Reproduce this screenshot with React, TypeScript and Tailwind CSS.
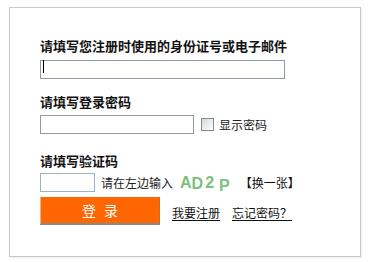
import React from 'react'

const cjk = { fontFamily: '"Noto Sans CJK SC", "Liberation Sans", sans-serif' }

const Captcha: React.FC = () => (
  <div
    className="flex items-end h-[19px] ml-[7px] text-[#7cc07c] font-bold leading-none select-none"
    style={{ fontFamily: '"Liberation Sans", Arial, sans-serif' }}
  >
    <span className="text-[16px] mb-[1px]">A</span>
    <span className="text-[16px]">D</span>
    <span className="text-[16px] ml-[2px] mb-[1px]">2</span>
    <span className="text-[16px] ml-[5px] -mb-[2px]">P</span>
  </div>
)

export default function App() {
  return (
    <div className="w-[370px] h-[262px] bg-white overflow-hidden text-[#111]" style={cjk}>
      <div className="mt-[7px] ml-[9px] w-[352px] h-[250px] border border-[#c8c8c8] shadow-[1px_1px_2px_rgba(0,0,0,0.08)] pl-[30px] pt-[30px] flex flex-col">
        <label className="text-[13px] leading-[16px] h-[16px] font-bold">
          请填写您注册时使用的身份证号或电子邮件
        </label>
        <div className="relative mt-[3px] w-[245px] h-[19px]">
          <input className="w-full h-full border border-[#8f9aa4] bg-white outline-none" />
          <span className="absolute left-[3px] top-[3px] w-[1px] h-[13px] bg-black" />
        </div>

        <label className="mt-[18px] text-[13px] leading-[16px] h-[16px] font-bold">请填写登录密码</label>
        <div className="mt-[5px] flex items-center h-[19px]">
          <input type="password" className="w-[154px] h-[19px] border border-[#8f9aa4] bg-white outline-none" />
          <span className="ml-[7px] w-[13px] h-[13px] border border-[#7f8a94] bg-gradient-to-br from-[#d8d8d8] to-white" />
          <span className="ml-[5px] text-[12px] leading-[14px] text-[#222]">显示密码</span>
        </div>

        <label className="mt-[19px] text-[13px] leading-[16px] h-[16px] font-bold">请填写验证码</label>
        <div className="mt-[4px] flex items-center h-[19px]">
          <input className="w-[55px] h-[19px] border border-[#9fb2c2] bg-white outline-none" />
          <span className="ml-[6px] text-[12px] leading-[14px] text-[#222]">请在左边输入</span>
          <Captcha />
          <span className="ml-[10px] text-[12px] leading-[14px] text-[#111] cursor-pointer">【换一张】</span>
        </div>

        <div className="mt-[5px] flex items-center h-[28px]">
          <button className="w-[120px] h-[28px] bg-[#ff6600] border-l border-l-[#ffb070] border-b-2 border-b-[#8a8a8a] border-r border-r-[#c86a30] flex items-center justify-center gap-[8px] text-white text-[14px] leading-none">
            <span>登</span>
            <span>录</span>
          </button>
          <a className="ml-[12px] mt-[4px] text-[12px] leading-[14px] text-[#111] underline underline-offset-2 cursor-pointer">
            我要注册
          </a>
          <a className="ml-[12px] mt-[4px] text-[12px] leading-[14px] text-[#111] underline underline-offset-2 cursor-pointer">
            忘记密码？
          </a>
        </div>
      </div>
    </div>
  )
}
